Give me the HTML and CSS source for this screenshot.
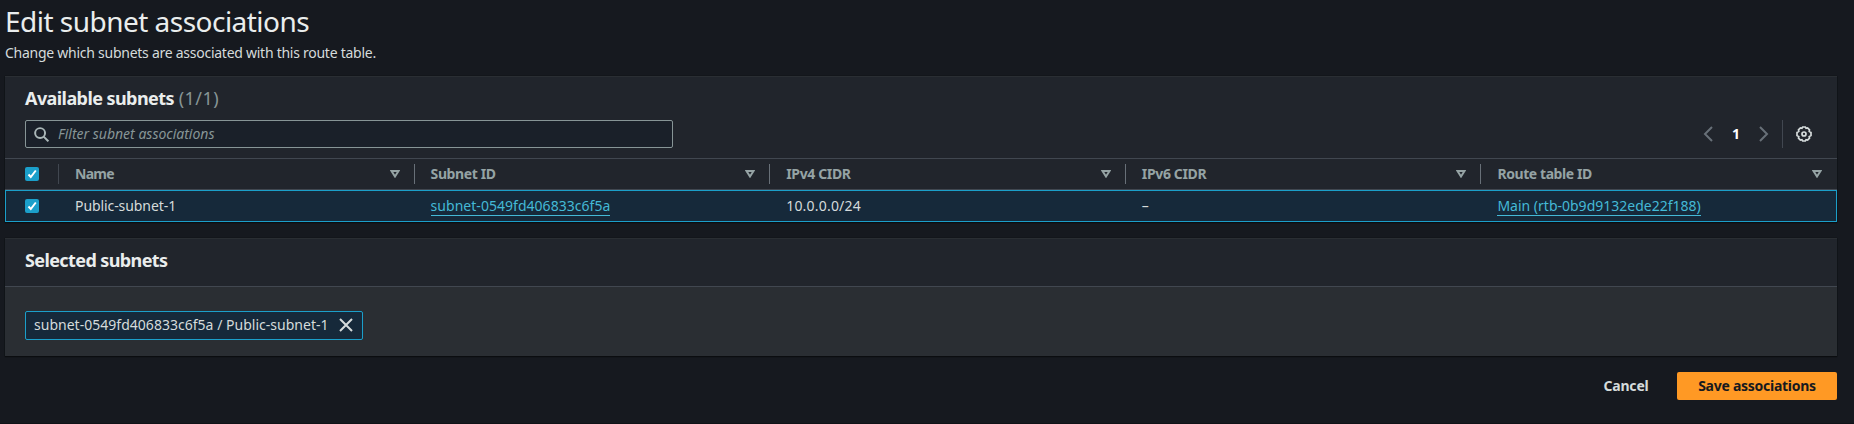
FILE: index.html
```html
<!DOCTYPE html>
<html lang="en">
<head>
<meta charset="utf-8">
<title>Edit subnet associations</title>
<link rel="stylesheet" href="styles.css">
</head>
<body>
<main class="page">
  <h1 class="title"><span class="t-title">Edit subnet associations</span></h1>
  <p class="description"><span class="t-desc">Change which subnets are associated with this route table.</span></p>

  <section class="panel available">
    <h2 class="heading"><span class="t-avail">Available subnets</span> <span class="count">(1/1)</span></h2>
    <div class="tools">
      <div class="filter">
        <svg class="search" viewBox="0 0 16 16"><circle cx="6.5" cy="6.5" r="5.300"/><path d="M10.3 10.3 15.300 15.300"/></svg>
        <span class="placeholder">Filter subnet associations</span>
      </div>
      <div class="pager">
        <svg class="arrow" viewBox="0 0 10 16"><path d="M9 1 2 8l7 7"/></svg>
        <span class="current">1</span>
        <svg class="arrow" viewBox="0 0 10 16"><path d="m1 1 7 7-7 7"/></svg>
        <span class="rule"></span>
        <svg class="gear" viewBox="0 0 16 16"><path d="M6.700 1h2.600l.8 1.300 1.500-.3 1.900 1.900-.3 1.500L15 6.500v3l-1.800 1.100.3 1.500-1.900 1.900-1.500-.3-.8 1.300H6.700l-.8-1.300-1.500.3-1.900-1.900.3-1.500L1 9.500v-3l1.800-1.100-.3-1.500L4.400 2l1.500.3z"/><circle cx="8" cy="8" r="2"/></svg>
      </div>
    </div>
    <div class="row head">
      <div class="check"><span class="box"><svg viewBox="0 0 14 14"><path d="m3.500 7.500 2.300 2.500 5-6.500"/></svg></span></div>
      <div class="cell"><span class="t-name">Name</span><svg class="sort" viewBox="0 0 10 8"><path d="M1.500 1h7L5 6.500z"/></svg></div>
      <div class="cell"><span class="t-sid">Subnet ID</span><svg class="sort" viewBox="0 0 10 8"><path d="M1.500 1h7L5 6.500z"/></svg></div>
      <div class="cell"><span class="t-cidr">IPv4 CIDR</span><svg class="sort" viewBox="0 0 10 8"><path d="M1.500 1h7L5 6.500z"/></svg></div>
      <div class="cell"><span class="t-cidr">IPv6 CIDR</span><svg class="sort" viewBox="0 0 10 8"><path d="M1.500 1h7L5 6.500z"/></svg></div>
      <div class="cell"><span class="t-rt">Route table ID</span><svg class="sort" viewBox="0 0 10 8"><path d="M1.500 1h7L5 6.500z"/></svg></div>
    </div>
    <div class="row selected">
      <div class="check"><span class="box"><svg viewBox="0 0 14 14"><path d="m3.500 7.500 2.300 2.500 5-6.500"/></svg></span></div>
      <div class="cell"><span class="t-public">Public-subnet-1</span></div>
      <div class="cell"><a class="link t-link">subnet-0549fd406833c6f5a</a></div>
      <div class="cell"><span class="t-ip">10.0.0.0/24</span></div>
      <div class="cell"><span>–</span></div>
      <div class="cell"><a class="link">Main (rtb-0b9d9132ede22f188)</a></div>
    </div>
  </section>

  <section class="panel chosen">
    <h2 class="heading"><span class="t-selected">Selected subnets</span></h2>
    <div class="tokens">
      <div class="token"><span class="t-token">subnet-0549fd406833c6f5a / Public-subnet-1</span><svg class="close" viewBox="0 0 14 14"><path d="m1 1 12 12M13 1 1 13"/></svg></div>
    </div>
  </section>

  <footer class="actions">
    <button class="cancel"><span class="t-cancel">Cancel</span></button>
    <button class="save"><span class="t-save">Save associations</span></button>
  </footer>
</main>
</body>
</html>
```
FILE: styles.css
```css
* { box-sizing: border-box; }
body { margin: 0; background: #16191f; color: #d5dbdb; font: 14px/22px "Noto Sans", "Open Sans", sans-serif; }
svg { display: block; fill: none; stroke: currentColor; flex: none; }
span, a { white-space: nowrap; }
.page { height: 424px; padding: 3px 17px 0 5px; border-bottom: 1px solid #0f1217; }
.title { margin: 0; height: 36px; font-size: 28px; line-height: 36px; font-weight: 400; color: #eaeded; }
.description { margin: 0; height: 37px; padding-top: 3px; }
.panel { background: #21252c; border-top: 1px solid #2a2e33; box-shadow: 0 1px 1px #0b0d10, 0 0 1px #0b0d10; }
.available { height: 146px; }
.heading { margin: 0; font-size: 18px; line-height: 22px; font-weight: 700; color: #eaeded; }
.available .heading { height: 43px; padding: 10px 20px 0; }
.count { font-weight: 400; color: #879596; letter-spacing: .5px; }
.tools { display: flex; justify-content: space-between; height: 38px; padding: 0 25px 10px 20px; }
.filter { display: flex; align-items: center; width: 648px; height: 28px; padding-left: 8px; border: 1px solid #879596; border-radius: 2px; background: #1a2029; }
.search { width: 15px; height: 15px; margin-right: 9px; color: #aab7b8; stroke-width: 2.100; }
.placeholder { font-style: italic; color: #879596; }
.pager { display: flex; align-items: center; height: 28px; }
.arrow { width: 10px; height: 16px; color: #687078; stroke-width: 2; }
.current { width: 46px; text-align: center; font-weight: 700; color: #fff; }
.rule { width: 1px; height: 28px; margin: 0 13px; background: #414750; }
.gear { width: 16px; height: 16px; color: #d5dbdb; stroke-width: 1.700; }
.row { display: grid; grid-template-columns: 54px repeat(5, 1fr); }
.head { height: 32px; border-top: 1px solid #414750; border-bottom: 1px solid #414750; color: #95a3a4; font-weight: 700; }
.check { display: flex; align-items: center; padding-left: 20px; }
.box { width: 14px; height: 14px; border-radius: 2px; background: #1b9fca; color: #fff; }
.box svg { width: 14px; height: 14px; stroke-width: 2; }
.cell { display: flex; align-items: center; justify-content: space-between; padding: 0 15px 0 16px; }
.head .check { background: linear-gradient(#414750, #414750) right center / 1px 20px no-repeat; }
.head .cell { background: linear-gradient(#687078, #687078) right center / 1px 20px no-repeat; }
.head .cell:last-child { background: none; }
.sort { width: 10px; height: 8px; stroke-width: 2; }
.selected { height: 32px; background: #16293a; box-shadow: inset 0 0 0 1px #1b9fca; }
.link { color: #44b9d6; border-bottom: 1px solid #44b9d6; line-height: 18px; }
.chosen { height: 118px; margin-top: 16px; }
.chosen .heading { height: 47px; padding: 10px 20px 0; }
.tokens { height: 70px; padding: 24px 20px; border-top: 1px solid #414750; background: #2a2e33; }
.token { display: flex; align-items: center; justify-content: space-between; width: 338px; height: 29px; padding: 0 9px 1px 8px; border: 1px solid #1b9fca; border-radius: 2px; background: #16293a; }
.close { width: 14px; height: 14px; stroke-width: 2; }
.actions { display: flex; justify-content: flex-end; gap: 8px; margin-top: 16px; }
button { height: 28px; padding: 0; border: 0; border-radius: 2px; font: 700 14px/28px "Noto Sans", "Open Sans", sans-serif; background: none; }
.cancel { width: 86px; color: #d5dbdb; }
.save { width: 160px; background: #ff9924; color: #16191f; }

/* Tracking per label */
.t-title { letter-spacing: -.52px; }
.t-desc { letter-spacing: -.26px; }
.t-avail { letter-spacing: -.57px; }
.t-selected { letter-spacing: -.6px; }
.t-name { letter-spacing: -.75px; }
.t-sid { letter-spacing: -.4px; }
.t-cidr { letter-spacing: -.35px; }
.t-rt { letter-spacing: -.42px; }
.t-public { letter-spacing: -.08px; }
.t-link { letter-spacing: .03px; }
.t-ip { letter-spacing: .2px; }
.t-token { letter-spacing: .02px; }
.t-cancel { letter-spacing: -.2px; }
.t-save { letter-spacing: -.27px; }
```
